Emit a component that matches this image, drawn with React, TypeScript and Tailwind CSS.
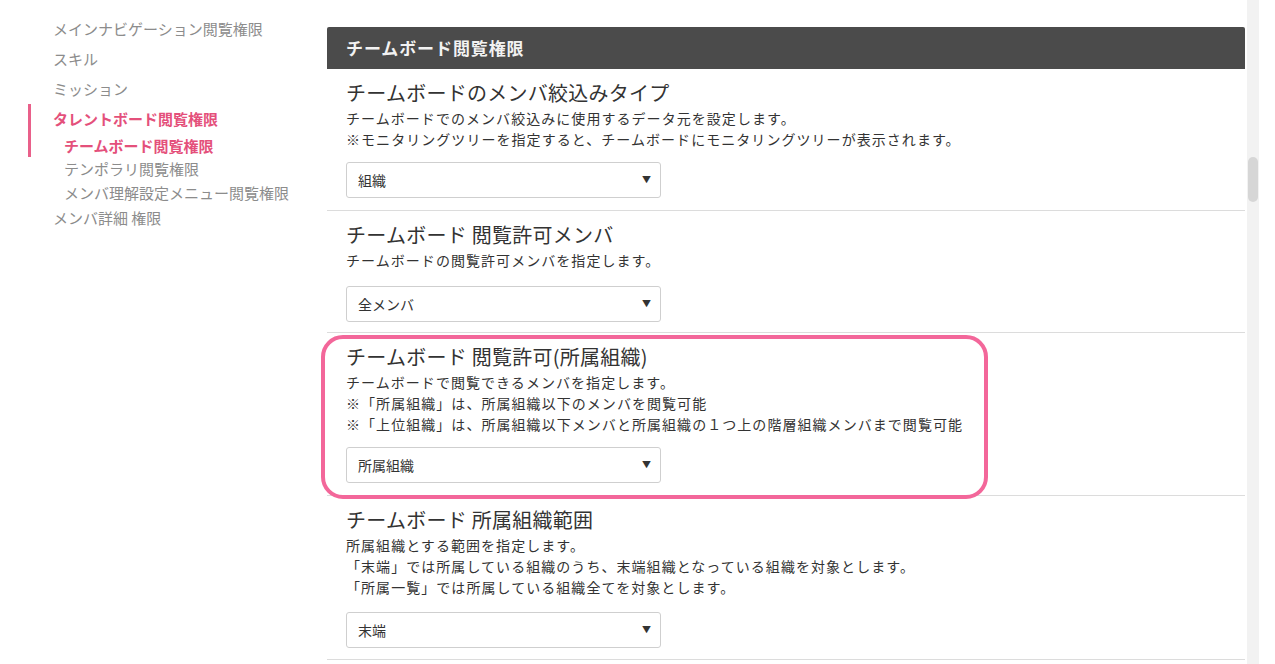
const navItems = [
    { label: "メインナビゲーション閲覧権限", sub: false, active: false, gap: "mt-0" },
    { label: "スキル", sub: false, active: false, gap: "mt-[6px]" },
    { label: "ミッション", sub: false, active: false, gap: "mt-[6px]" },
    { label: "タレントボード閲覧権限", sub: false, active: true, gap: "mt-[6px]" },
    { label: "チームボード閲覧権限", sub: true, active: true, gap: "mt-[3px]" },
    { label: "テンポラリ閲覧権限", sub: true, active: false, gap: "mt-[-1px]" },
    { label: "メンバ理解設定メニュー閲覧権限", sub: true, active: false, gap: "mt-0" },
    { label: "メンバ詳細 権限", sub: false, active: false, gap: "mt-[1px]" },
];

const sections = [
    {
        title: "チームボードのメンバ絞込みタイプ",
        lines: [
            "チームボードでのメンバ絞込みに使用するデータ元を設定します。",
            "※モニタリングツリーを指定すると、チームボードにモニタリングツリーが表示されます。",
        ],
        value: "組織",
        highlight: false,
        selectGap: "mt-[12px]",
        bottom: "pb-[12px]",
    },
    {
        title: "チームボード 閲覧許可メンバ",
        lines: ["チームボードの閲覧許可メンバを指定します。"],
        value: "全メンバ",
        highlight: false,
        selectGap: "mt-[15px]",
        bottom: "pb-[10px]",
    },
    {
        title: "チームボード 閲覧許可(所属組織)",
        lines: [
            "チームボードで閲覧できるメンバを指定します。",
            "※「所属組織」は、所属組織以下のメンバを閲覧可能",
            "※「上位組織」は、所属組織以下メンバと所属組織の１つ上の階層組織メンバまで閲覧可能",
        ],
        value: "所属組織",
        highlight: true,
        selectGap: "mt-[12px]",
        bottom: "pb-[12px]",
    },
    {
        title: "チームボード 所属組織範囲",
        lines: [
            "所属組織とする範囲を指定します。",
            "「末端」では所属している組織のうち、末端組織となっている組織を対象とします。",
            "「所属一覧」では所属している組織全てを対象とします。",
        ],
        value: "末端",
        highlight: false,
        selectGap: "mt-[14px]",
        bottom: "pb-[11px]",
    },
];

const Sidebar = () => {
    return (
        <div className="w-[327px] shrink-0 pt-[17px] relative">
            <div className="absolute left-[28px] top-[104px] w-[3px] h-[53px] bg-[#e9608a]" />
            {navItems.map((item, i) => (
                <div
                    key={i}
                    className={`${item.sub ? "pl-[64px]" : "pl-[53px]"} ${item.gap} ${
                        item.active ? "text-[#e4507b] font-bold" : "text-[#8c8c8c]"
                    } h-[24px] text-[15px] leading-[24px] whitespace-nowrap`}
                >
                    {item.label}
                </div>
            ))}
        </div>
    );
};

const SelectBox = ({ value }: { value: string }) => {
    return (
        <div className="w-[315px] h-[36px] border border-[#cfcfcf] rounded-[3px] bg-white flex items-center justify-between pl-[11px] pr-[9px] text-[14px] text-[#333]">
            <span>{value}</span>
            <span className="text-[9px] text-[#333]">▼</span>
        </div>
    );
};

const App = () => {
    return (
        <div
            className="w-[1275px] h-[664px] overflow-hidden bg-white flex"
            style={{ fontFamily: '"Noto Sans CJK JP", "Noto Sans", sans-serif' }}
        >
            <Sidebar />
            <div className="w-[918px] shrink-0 pt-[27px]">
                <div className="h-[42px] bg-[#4b4b4b] rounded-t-[2px] flex items-center pl-[19px] text-[17px] font-bold text-[#f2f2f2] tracking-[0.9px]">
                    チームボード閲覧権限
                </div>
                {sections.map((s, i) => (
                    <div key={i} className={`relative border-b border-[#dcdcdc] pl-[19px] pt-[11px] ${s.bottom}`}>
                        {s.highlight && (
                            <div className="absolute left-[-6px] top-[2px] w-[667px] h-[164px] border-[4px] border-[#f3679a] rounded-[22px] pointer-events-none" />
                        )}
                        <div className="text-[20px] leading-[26px] text-[#333] tracking-[0.25px]">{s.title}</div>
                        <div className="mt-[2px] text-[14px] leading-[21px] text-[#333] tracking-[1.05px]">
                            {s.lines.map((l, j) => (
                                <div key={j}>{l}</div>
                            ))}
                        </div>
                        <div className={s.selectGap}>
                            <SelectBox value={s.value} />
                        </div>
                    </div>
                ))}
            </div>
            <div className="w-[2px] shrink-0" />
            <div className="w-[12px] shrink-0 bg-[#f2f2f2] relative">
                <div className="absolute left-[1px] top-[157px] w-[10px] h-[45px] rounded-[5px] bg-[#d6d6d6]" />
            </div>
        </div>
    );
};

export default App;
